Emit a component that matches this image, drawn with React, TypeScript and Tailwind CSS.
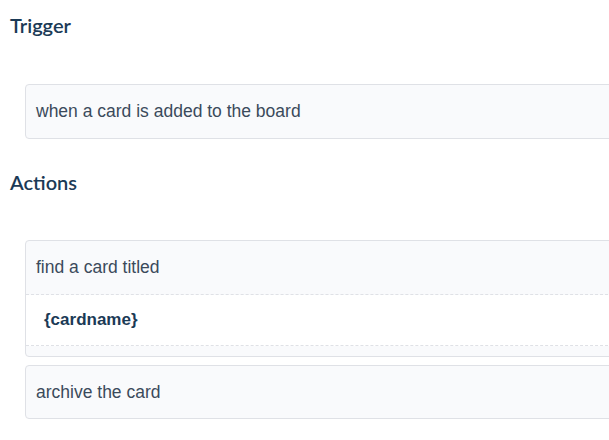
import React from 'react';

const Section: React.FC<{ title: string; className?: string }> = ({ title, className }) => (
  <h2 className={`text-[20px] font-semibold leading-6 text-[#1b3a56] ${className ?? ''}`} style={{ fontFamily: 'Lato, sans-serif' }}>
    {title}
  </h2>
);

const App: React.FC = () => {
  return (
    <div className="min-h-screen w-full overflow-hidden bg-white pl-[10px] pt-[13px]" style={{ fontFamily: '"Liberation Sans", Arial, sans-serif' }}>
      <Section title="Trigger" />

      <div className="ml-[15px] mr-[-20px] mt-[47px] flex h-[55px] items-center rounded border border-[#dfe1e6] bg-[#f9fafc] px-[10px] text-[17.5px] text-[#3b4a5b]">
        when a card is added to the board
      </div>

      <Section title="Actions" className="mt-[31px]" />

      <div className="ml-[15px] mr-[-20px] mt-[46px] rounded border border-[#dfe1e6] bg-[#f9fafc]">
        <div className="flex h-[54px] items-center border-b border-dashed border-[#dfe1e6] px-[10px] text-[17.5px] text-[#3b4a5b]">
          find a card titled
        </div>
        <div className="flex h-[51px] items-center border-b border-dashed border-[#dfe1e6] bg-white px-[18px] text-[17px] font-bold text-[#1b3a56]">
          {'{cardname}'}
        </div>
        <div className="h-[10px]" />
      </div>

      <div className="ml-[15px] mr-[-20px] mt-[8px] flex h-[54px] items-center rounded border border-[#dfe1e6] bg-[#f9fafc] px-[10px] text-[17.5px] text-[#3b4a5b]">
        archive the card
      </div>
    </div>
  );
};

export default App;
